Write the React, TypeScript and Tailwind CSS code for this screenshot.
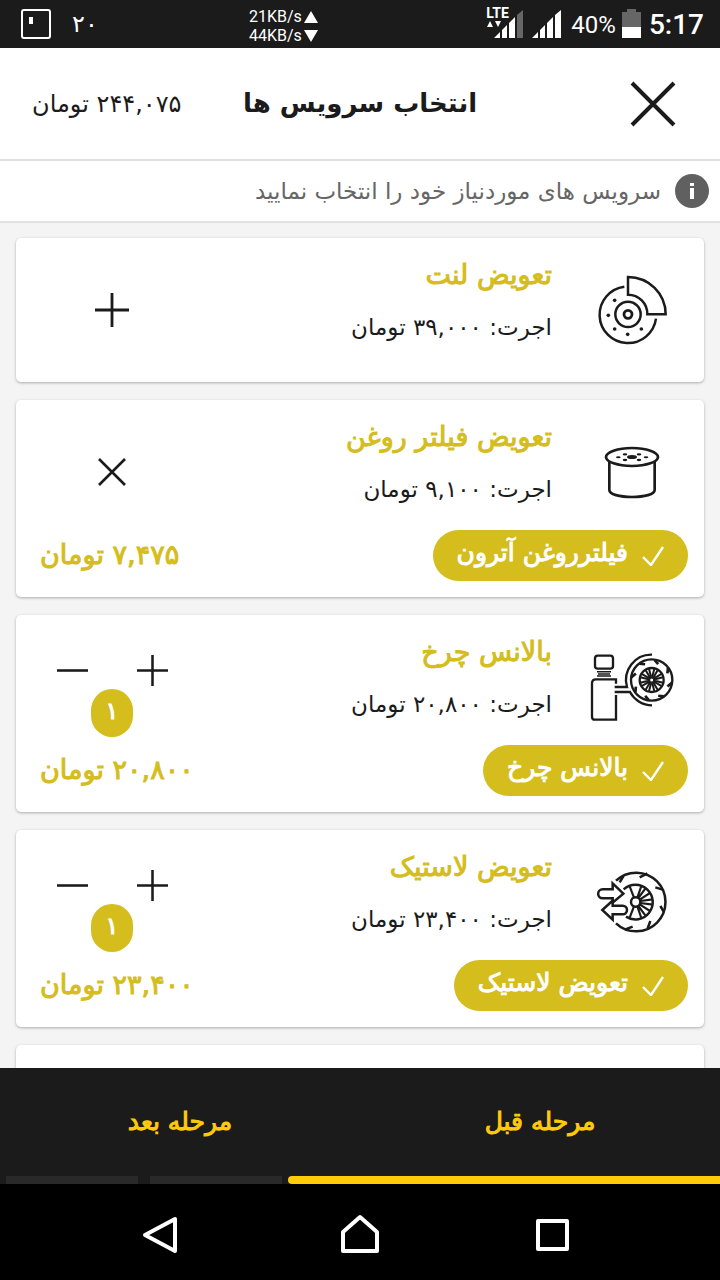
import type { ReactNode } from "react";

const SPOKES_8 = [0, 45, 90, 135, 180, 225, 270, 315];
const TREADS_8 = [10, 55, 100, 145, 190, 235, 280, 325];

function BrakeIcon() {
  return (
    <svg viewBox="48 30 270 240" className="h-20 w-[90px]" fill="none" stroke="#1b1b1b" strokeWidth="7.5" aria-hidden="true">
      <path d="M163 80 A85 85 0 1 0 258 176" />
      <circle cx="174" cy="163" r="38" />
      <circle cx="174" cy="163" r="12" strokeWidth="8.5" />
      <path d="M174 51 A113 112 0 0 1 287 163 H232 A58 58 0 0 0 174 104 Z" />
      <g fill="#1b1b1b" stroke="none">
        <circle cx="134" cy="121" r="5.5" />
        <circle cx="115" cy="166" r="5.5" />
        <circle cx="134" cy="207" r="5.5" />
        <circle cx="173" cy="223" r="5.5" />
        <circle cx="214" cy="207" r="5.5" />
      </g>
    </svg>
  );
}

function FilterIcon() {
  return (
    <svg viewBox="48 6 270 240" className="h-20 w-[90px]" fill="none" stroke="#1b1b1b" strokeWidth="8" aria-hidden="true">
      <ellipse cx="186" cy="81" rx="78" ry="27" />
      <path d="M118 96 V180 C118 193 149 201 186 201 C223 201 254 193 254 180 V96" />
      <g fill="#1b1b1b" stroke="none">
        <ellipse cx="186" cy="81" rx="15" ry="6" />
        <ellipse cx="145" cy="82" rx="7" ry="3" />
        <ellipse cx="228" cy="82" rx="7" ry="3" />
        <ellipse cx="165" cy="73" rx="7" ry="3.5" />
        <ellipse cx="207" cy="73" rx="7" ry="3.5" />
        <ellipse cx="165" cy="90" rx="7" ry="3.5" />
        <ellipse cx="207" cy="90" rx="7" ry="3.5" />
      </g>
    </svg>
  );
}

function BalanceIcon() {
  return (
    <svg viewBox="48 21 270 240" className="h-20 w-[90px]" fill="none" stroke="#1b1b1b" strokeWidth="7" aria-hidden="true">
      <rect x="75" y="47" width="54" height="39" rx="8" />
      <path d="M81 95 H123 M84 102 H120 M81 108 H123" strokeWidth="4.5" />
      <path d="M138 131 V118 H78 Q66 118 66 130 V230 Q66 239 75 239 H138 V165" />
      <path d="M134 141 H171 A76 76 0 0 1 246 44" />
      <path d="M134 156 H180 A76 76 0 0 0 246 196" />
      <circle cx="245" cy="120" r="62" />
      <circle cx="245" cy="120" r="36" />
      <circle cx="245" cy="120" r="8" />
      {SPOKES_8.map((a) => (
        <path key={a} d="M243 110 L237 86 M247 110 L253 86" strokeWidth="6" transform={`rotate(${a} 245 120)`} />
      ))}
      {TREADS_8.map((a) => (
        <path key={a} d="M243 59 L256 70" strokeWidth="8" transform={`rotate(${a} 245 120)`} />
      ))}
    </svg>
  );
}

function TireSwapIcon() {
  return (
    <svg viewBox="48 36 270 240" className="h-20 w-[90px]" fill="none" stroke="#1b1b1b" strokeWidth="7.5" aria-hidden="true">
      <path d="M138 92 A88 88 0 1 1 138 220" />
      <path d="M161 118 A52 52 0 1 1 168 200" />
      <circle cx="197" cy="156" r="14" />
      <path
        d="M192 143 L179 109 M202 143 L214 108 M205 144 L226 116 M209 149 L240 129 M211 153 L248 148 M211 159 L248 164 M209 163 L240 183 M205 168 L226 196 M202 169 L214 204 M192 169 L179 203"
        strokeWidth="6.5"
      />
      <path d="M149 97 L160 79 M209 82 L232 70 M256 112 L278 119 M271 168 L282 186 M241 213 L233 235 M188 230 L166 238" />
      <path d="M160 131 L128 100 V118 H98 A13 13 0 0 0 98 145 H128 V158 Z" fill="#fff" />
      <path d="M97 180 L128 152 V167 H158 A13 13 0 0 1 158 193 H128 V209 Z" fill="#fff" />
    </svg>
  );
}

function Plus({ big = false }: { big?: boolean }) {
  return (
    <svg viewBox="0 0 34 34" className={big ? "size-[34px]" : "size-[31px]"} stroke="#1b1b1b" strokeWidth="2.8" aria-hidden="true">
      <path d="M0 17 H34 M17 0 V34" />
    </svg>
  );
}

function Minus() {
  return (
    <svg viewBox="0 0 34 34" className="size-[31px]" stroke="#1b1b1b" strokeWidth="2.8" aria-hidden="true">
      <path d="M0 17 H34" />
    </svg>
  );
}

type Service = {
  name: string;
  fee: string;
  icon: ReactNode;
  control: "add" | "remove" | "stepper";
  option?: string;
  total?: string;
};

const services: Service[] = [
  { name: "تعویض لنت", fee: "۳۹,۰۰۰", icon: <BrakeIcon />, control: "add" },
  { name: "تعویض فیلتر روغن", fee: "۹,۱۰۰", icon: <FilterIcon />, control: "remove", option: "فیلترروغن آترون", total: "۷,۴۷۵" },
  { name: "بالانس چرخ", fee: "۲۰,۸۰۰", icon: <BalanceIcon />, control: "stepper", option: "بالانس چرخ", total: "۲۰,۸۰۰" },
  { name: "تعویض لاستیک", fee: "۲۳,۴۰۰", icon: <TireSwapIcon />, control: "stepper", option: "تعویض لاستیک", total: "۲۳,۴۰۰" },
];

function Controls({ kind }: { kind: Service["control"] }) {
  if (kind === "stepper") {
    return (
      <div className="flex w-48 flex-col items-center pt-9">
        <div className="flex h-[38px]">
          <button type="button" aria-label="افزایش" className="flex w-20 items-center justify-center">
            <Plus />
          </button>
          <button type="button" aria-label="کاهش" className="flex w-20 items-center justify-center">
            <Minus />
          </button>
        </div>
        <span className="flex h-12 w-[42px] items-center justify-center rounded-full bg-[#d4bd1c] pb-1 text-2xl text-white [-webkit-text-stroke:1px]">۱</span>
      </div>
    );
  }
  return (
    <div className="flex w-48 justify-center pt-8">
      <button type="button" aria-label={kind === "add" ? "افزودن" : "حذف"} className="flex size-20 items-center justify-center">
        {kind === "add" ? (
          <Plus big />
        ) : (
          <svg viewBox="0 0 28 28" className="size-7" stroke="#1b1b1b" strokeWidth="2.6" aria-hidden="true">
            <path d="M1 1 L27 27 M27 1 L1 27" />
          </svg>
        )}
      </button>
    </div>
  );
}

function ServiceCard({ s }: { s: Service }) {
  return (
    <li className="shrink-0 rounded-[5px] bg-white pb-4 shadow-[0_1px_3px_rgba(0,0,0,0.3)]">
      <div className="flex h-32 items-start">
        <div className="flex w-[152px] justify-center pt-8 pl-1.5">{s.icon}</div>
        <div className="flex flex-1 flex-col gap-3 pt-[17px] whitespace-nowrap">
          <h2 className="text-[27px] leading-10 text-[#d4bd1c] [-webkit-text-stroke:1px]">{s.name}</h2>
          <p className="text-[23px] leading-10">اجرت: {s.fee} تومان</p>
        </div>
        <Controls kind={s.control} />
      </div>
      {s.option && (
        <div className="flex items-center justify-between pt-0.5 pr-4 pl-6">
          <button type="button" className="flex h-[51px] items-center gap-3.5 rounded-full bg-[#d4bd1c] px-6 text-white">
            <svg viewBox="0 0 22 20" className="h-5 w-[22px]" fill="none" stroke="#fff" strokeWidth="2.4" aria-hidden="true">
              <path d="M1 11 L9 19 L21 1" />
            </svg>
            <span className="pb-1.5 text-[25px] [-webkit-text-stroke:1px]">{s.option}</span>
          </button>
          <span className="text-[27px] text-[#d4bd1c] [-webkit-text-stroke:1px]">{s.total} تومان</span>
        </div>
      )}
    </li>
  );
}

function StatusBar() {
  return (
    <div dir="ltr" className="flex h-12 shrink-0 items-center bg-[#1b1b1b] pr-4 pl-5 font-['Roboto','DejaVu_Sans',sans-serif] text-white">
      <div className="flex w-[229px] items-center gap-5">
        <svg viewBox="0 0 32 32" className="size-8" fill="none" aria-hidden="true">
          <rect x="2" y="2" width="28" height="28" rx="2" stroke="#fff" strokeWidth="2" />
          <rect x="9" y="9" width="4" height="7" fill="#fff" />
        </svg>
        <span className="font-['DejaVu_Sans',sans-serif] text-2xl">۲۰</span>
      </div>
      <div className="flex flex-col pt-1 text-base leading-[19px]">
        <span className="flex items-center gap-0.5">
          21KB/s
          <svg viewBox="0 0 14 14" className="size-3.5" fill="#fff" aria-hidden="true">
            <path d="M7 1 L14 13 H0 Z" />
          </svg>
        </span>
        <span className="flex items-center gap-0.5">
          44KB/s
          <svg viewBox="0 0 14 14" className="size-3.5" fill="#fff" aria-hidden="true">
            <path d="M7 13 L14 1 H0 Z" />
          </svg>
        </span>
      </div>
      <div className="ml-auto flex items-center">
        <div className="relative h-12 w-[38px]">
          <span className="absolute top-1 left-0 text-sm leading-[18px] font-bold">LTE</span>
          <svg viewBox="0 0 38 48" className="h-12 w-[38px]" fill="#fff" aria-hidden="true">
            <path d="M1 27 L4 21 L7 27 Z M9 21 H15 L12 27 Z" />
            <path d="M8 38 L14 32 V38 Z M16 30 L21 25 V38 H16 Z M23 23 L29 17 V38 H23 Z" />
            <path d="M31 15 L37 10 V38 H31 Z" fill="#666" />
          </svg>
        </div>
        <svg viewBox="0 0 29 48" className="ml-2 h-12 w-[29px]" fill="#fff" aria-hidden="true">
          <path d="M0 38 L6 32 V38 Z M8 30 L13 25 V38 H8 Z M15 23 L21 17 V38 H15 Z M23 15 L29 10 V38 H23 Z" />
        </svg>
        <span className="ml-2.5 pt-0.5 text-2xl">40%</span>
        <svg viewBox="0 0 19 30" className="mr-2 ml-1.5 h-[30px] w-[19px]" aria-hidden="true">
          <path d="M0 3 H5 V0 H14 V3 H19 V18 H0 Z" fill="#666" />
          <rect y="18" width="19" height="11" fill="#fff" />
        </svg>
        <span className="pt-0.5 text-[28px] font-medium">5:17</span>
      </div>
    </div>
  );
}

export default function App() {
  return (
    <div dir="rtl" className="flex h-screen flex-col overflow-hidden bg-[#f4f4f4] font-['DejaVu_Sans',sans-serif] text-[#1b1b1b]">
      <StatusBar />
      <header className="grid h-[113px] shrink-0 grid-cols-[1fr_auto_1fr] items-center border-b-2 border-[#e0e0e0] bg-white px-8 whitespace-nowrap">
        <button type="button" aria-label="بستن" className="mr-3 size-[46px]">
          <svg viewBox="0 0 46 46" className="size-[46px]" stroke="#1b1b1b" strokeWidth="4" aria-hidden="true">
            <path d="M2 2 L44 44 M44 2 L2 44" />
          </svg>
        </button>
        <h1 className="text-[26px] font-bold">انتخاب سرویس ها</h1>
        <span className="text-left text-2xl">۲۴۴,۰۷۵ تومان</span>
      </header>
      <div className="flex h-[62px] shrink-0 items-center gap-3.5 border-b-2 border-[#e2e2e2] bg-white px-[11px] text-[#666]">
        <svg viewBox="0 0 34 34" className="size-[34px]" aria-hidden="true">
          <circle cx="17" cy="17" r="17" fill="#606060" />
          <path d="M15 9 H19 V12 H15 Z M15 14 H19 V25 H15 Z" fill="#fff" />
        </svg>
        <p className="text-[23px] whitespace-nowrap">سرویس های موردنیاز خود را انتخاب نمایید</p>
      </div>
      <main className="min-h-0 flex-1 overflow-hidden px-4 pt-[15px]">
        <ul className="flex flex-col gap-[18px]">
          {services.map((s) => (
            <ServiceCard key={s.name} s={s} />
          ))}
          <li className="h-36 shrink-0 rounded-[5px] bg-white shadow-[0_1px_3px_rgba(0,0,0,0.3)]" />
        </ul>
      </main>
      <footer className="shrink-0 bg-[#1b1b1b]">
        <div className="flex h-[108px] text-[25px] text-[#ffcb08] [-webkit-text-stroke:1px]">
          <button type="button" className="flex-1">مرحله قبل</button>
          <button type="button" className="flex-1">مرحله بعد</button>
        </div>
        <div className="grid h-2 grid-cols-5">
          <div className="col-span-3 rounded-l-full bg-[#ffcb08]" />
          <div className="mx-1.5 bg-[#292929]" />
          <div className="mx-1.5 bg-[#292929]" />
        </div>
      </footer>
      <nav dir="ltr" className="grid h-24 shrink-0 grid-cols-3 bg-black px-16 pt-2">
        <button type="button" aria-label="بازگشت" className="flex items-center justify-center">
          <svg viewBox="0 0 48 48" className="size-12" fill="none" stroke="#fff" strokeWidth="4" strokeLinejoin="round" aria-hidden="true">
            <path d="M36 7 V39 L6 23 Z" />
          </svg>
        </button>
        <button type="button" aria-label="خانه" className="flex items-center justify-center">
          <svg viewBox="0 0 48 48" className="size-12" fill="none" stroke="#fff" strokeWidth="4" strokeLinejoin="round" aria-hidden="true">
            <path d="M24 5 L41 20 V39 H7 V20 Z" />
          </svg>
        </button>
        <button type="button" aria-label="برنامه‌های اخیر" className="flex items-center justify-center">
          <svg viewBox="0 0 48 48" className="size-12" fill="none" stroke="#fff" strokeWidth="4" strokeLinejoin="round" aria-hidden="true">
            <rect x="5" y="9" width="29" height="28" />
          </svg>
        </button>
      </nav>
    </div>
  );
}
